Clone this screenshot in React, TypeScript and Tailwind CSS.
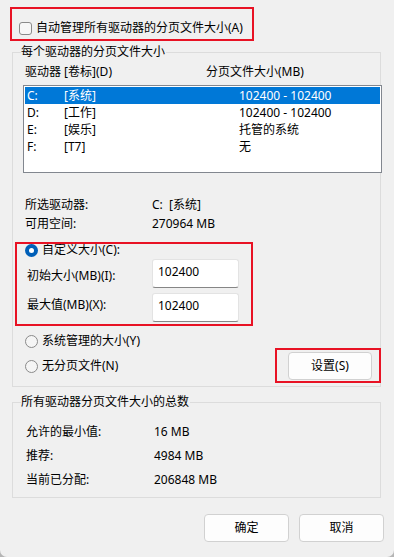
import React from "react";

const FONT = { fontFamily: '"Noto Sans", "Noto Sans CJK SC", sans-serif' };

function Radio({ checked }: { checked?: boolean }) {
  if (checked) {
    return (
      <span className="flex h-[13px] w-[13px] shrink-0 items-center justify-center rounded-full bg-[#005fb8]">
        <span className="h-[5px] w-[5px] rounded-full bg-white" />
      </span>
    );
  }
  return <span className="h-[13px] w-[13px] shrink-0 rounded-full border border-[#8a8a8a] bg-[#f5f5f5]" />;
}

function Input({ value }: { value: string }) {
  return (
    <div className="h-[29px] w-[87px] rounded-[3px] border border-[#e3e3e3] border-b-[#868686] bg-white pl-[5px] pt-[4px] leading-[16px]">
      {value}
    </div>
  );
}

function Btn({ children, w }: { children: React.ReactNode; w: string }) {
  return (
    <div className={`flex h-[28px] ${w} items-center justify-center rounded-[4px] border border-[#d1d1d1] bg-[#fdfdfd] leading-[16px]`}>
      {children}
    </div>
  );
}

const drives = [
  ["C:", "[系统]", "102400 - 102400"],
  ["D:", "[工作]", "102400 - 102400"],
  ["E:", "[娱乐]", "托管的系统"],
  ["F:", "[T7]", "无"],
];

export default function App() {
  return (
    <div className="h-[557px] w-[394px] bg-[#b5b5b5]">
      <div
        className="relative h-[557px] w-[394px] overflow-hidden rounded-b-[7px] bg-[#f0f0f0] pl-[12px] text-[12px] text-black"
        style={FONT}
      >
        {/* auto manage */}
        <div className="flex h-[16px] items-center gap-[4px] pl-[7px] pt-0 mt-[20px] leading-[16px]">
          <span className="h-[13px] w-[13px] rounded-[3px] border border-[#8a8a8a] bg-[#f7f7f7]" />
          <span>自动管理所有驱动器的分页文件大小(A)</span>
        </div>

        {/* group 1 */}
        <div className="relative mt-[16px] w-[369px] border border-[#dcdcdc] pb-[6px]">
          <span className="absolute -top-[9px] left-[8px] bg-[#f0f0f0] pr-[1px] leading-[16px]">
            每个驱动器的分页文件大小
          </span>
          <div className="mt-[11px] flex h-[16px] items-center pl-[12px] leading-[16px]">
            <span className="w-[181px]">驱动器 [卷标](D)</span>
            <span>分页文件大小(MB)</span>
          </div>
          <div className="ml-[10px] mt-[5px] h-[88px] w-[359px] border border-[#82878f] bg-white px-[1px] pt-[1px]">
            {drives.map((d, i) => (
              <div
                key={i}
                className={`flex h-[17px] items-center pl-[2px] leading-[16px] ${i === 0 ? "bg-[#0078d7] text-white" : ""}`}
              >
                <span className="w-[37px]">{d[0]}</span>
                <span className="w-[175px]">{d[1]}</span>
                <span>{d[2]}</span>
              </div>
            ))}
          </div>

          <div className="mt-[22px] pl-[12px] leading-[16px]">
            <div className="flex h-[19px] items-center">
              <span className="w-[127px]">所选驱动器:</span>
              <span>C:&nbsp;&nbsp;[系统]</span>
            </div>
            <div className="flex h-[19px] items-center">
              <span className="w-[127px]">可用空间:</span>
              <span>270964 MB</span>
            </div>
          </div>

          <div className="mt-[9px] flex h-[16px] items-center gap-[4px] pl-[12px] leading-[16px]">
            <Radio checked />
            <span>自定义大小(C):</span>
          </div>
          <div className="mt-[1px] flex h-[29px] items-center pl-[14px] leading-[16px]">
            <span className="w-[125px] pt-[5px]">初始大小(MB)(I):</span>
            <Input value="102400" />
          </div>
          <div className="mt-[5px] flex h-[29px] items-center pl-[14px] leading-[16px]">
            <span className="w-[125px] pb-[5px]">最大值(MB)(X):</span>
            <Input value="102400" />
          </div>

          <div className="mt-[11px] flex h-[16px] items-center gap-[4px] pl-[12px] leading-[16px]">
            <Radio />
            <span>系统管理的大小(Y)</span>
          </div>
          <div className="mt-[3px] flex h-[28px] items-center justify-between pl-[12px] pr-[8px] leading-[16px]">
            <div className="flex items-center gap-[4px]">
              <Radio />
              <span>无分页文件(N)</span>
            </div>
            <Btn w="w-[84px]">设置(S)</Btn>
          </div>
        </div>

        {/* group 2 */}
        <div className="relative mt-[15px] w-[369px] border border-[#dcdcdc] pb-[6px] pl-[13px] leading-[16px]">
          <span className="absolute -top-[9px] left-[8px] bg-[#f0f0f0] pr-[1px] leading-[16px]">
            所有驱动器分页文件大小的总数
          </span>
          <div className="mt-[17px] flex h-[24px] items-center">
            <span className="w-[128px]">允许的最小值:</span>
            <span>16 MB</span>
          </div>
          <div className="flex h-[24px] items-center">
            <span className="w-[128px]">推荐:</span>
            <span>4984 MB</span>
          </div>
          <div className="flex h-[23px] items-center">
            <span className="w-[128px]">当前已分配:</span>
            <span>206848 MB</span>
          </div>
        </div>

        {/* buttons */}
        <div className="mt-[16px] flex w-[372px] justify-end gap-[10px]">
          <Btn w="w-[85px]">确定</Btn>
          <Btn w="w-[85px]">取消</Btn>
        </div>

        {/* red annotation boxes */}
        <div className="pointer-events-none absolute left-[10px] top-[7px] h-[34px] w-[244px] border-2 border-[#e81224]" />
        <div className="pointer-events-none absolute left-[15px] top-[242px] h-[84px] w-[238px] border-2 border-[#e81224]" />
        <div className="pointer-events-none absolute left-[275px] top-[348px] h-[35px] w-[106px] border-2 border-[#e81224]" />
      </div>
    </div>
  );
}
